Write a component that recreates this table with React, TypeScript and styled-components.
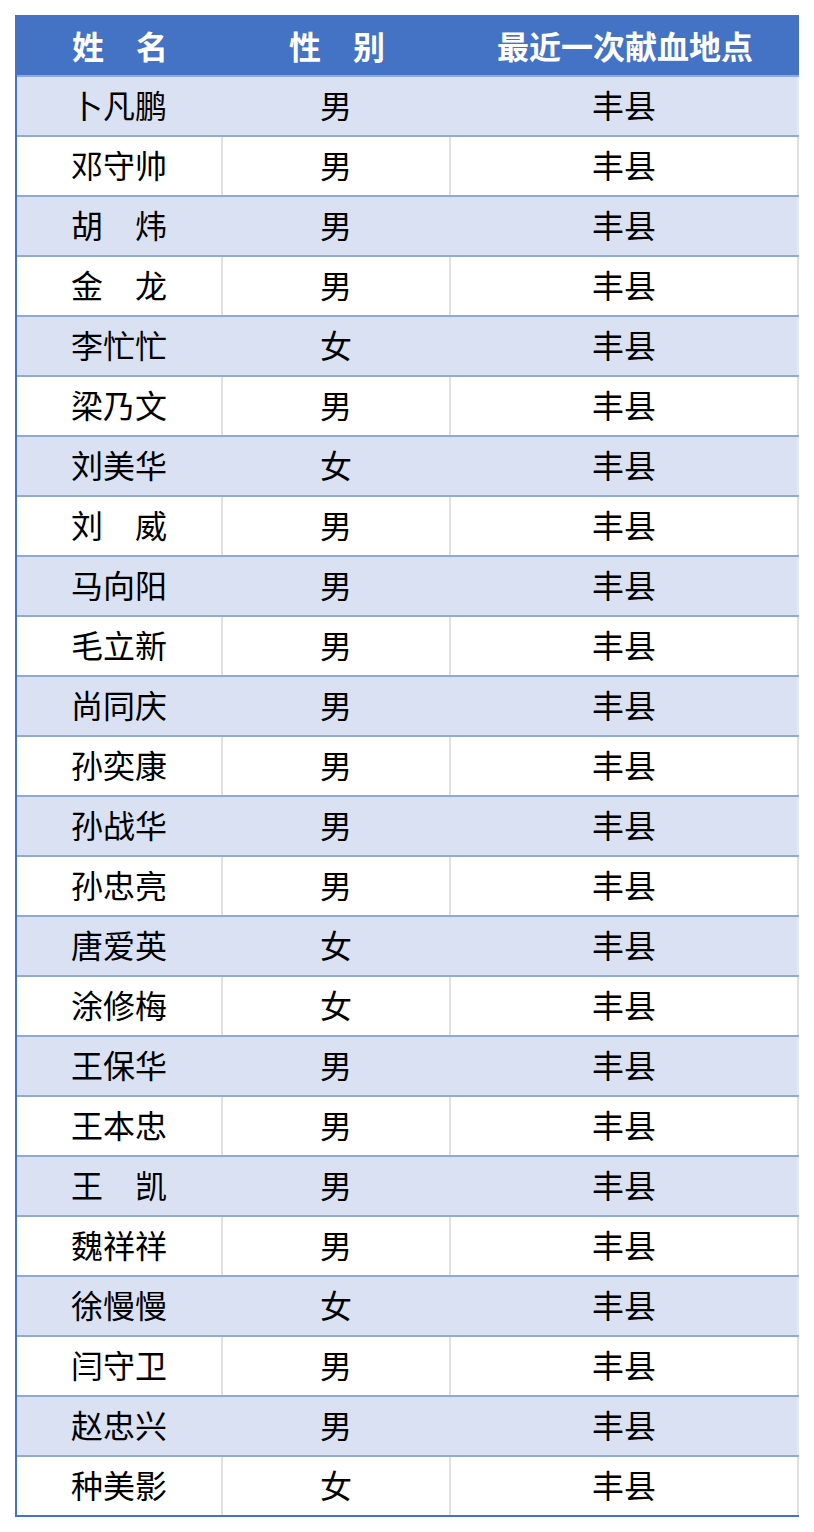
import React from "react";
import styled, { createGlobalStyle } from "styled-components";

type Donor = {
  name: string;
  gender: string;
  place: string;
};

const donors: Donor[] = [
  { name: "卜凡鹏", gender: "男", place: "丰县" },
  { name: "邓守帅", gender: "男", place: "丰县" },
  { name: "胡　炜", gender: "男", place: "丰县" },
  { name: "金　龙", gender: "男", place: "丰县" },
  { name: "李忙忙", gender: "女", place: "丰县" },
  { name: "梁乃文", gender: "男", place: "丰县" },
  { name: "刘美华", gender: "女", place: "丰县" },
  { name: "刘　威", gender: "男", place: "丰县" },
  { name: "马向阳", gender: "男", place: "丰县" },
  { name: "毛立新", gender: "男", place: "丰县" },
  { name: "尚同庆", gender: "男", place: "丰县" },
  { name: "孙奕康", gender: "男", place: "丰县" },
  { name: "孙战华", gender: "男", place: "丰县" },
  { name: "孙忠亮", gender: "男", place: "丰县" },
  { name: "唐爱英", gender: "女", place: "丰县" },
  { name: "涂修梅", gender: "女", place: "丰县" },
  { name: "王保华", gender: "男", place: "丰县" },
  { name: "王本忠", gender: "男", place: "丰县" },
  { name: "王　凯", gender: "男", place: "丰县" },
  { name: "魏祥祥", gender: "男", place: "丰县" },
  { name: "徐慢慢", gender: "女", place: "丰县" },
  { name: "闫守卫", gender: "男", place: "丰县" },
  { name: "赵忠兴", gender: "男", place: "丰县" },
  { name: "种美影", gender: "女", place: "丰县" }
];

const GlobalStyle = createGlobalStyle`
  body {
    margin: 0;
    background: #ffffff;
    font-family: "Noto Sans CJK SC", "Noto Sans", sans-serif;
  }
`;

const App: React.FC = () => {
  return (
    <>
      <GlobalStyle />
      <Page>
        <Table>
          <HeaderRow>
            <HeaderCell>姓　名</HeaderCell>
            <HeaderCell>性　别</HeaderCell>
            <HeaderCell>最近一次献血地点</HeaderCell>
          </HeaderRow>
          {donors.map((d, i) => (
            <Row key={d.name} banded={i % 2 === 0}>
              <Cell banded={i % 2 === 0}>{d.name}</Cell>
              <Cell banded={i % 2 === 0}>{d.gender}</Cell>
              <Cell banded={i % 2 === 0} last>
                {d.place}
              </Cell>
            </Row>
          ))}
        </Table>
      </Page>
    </>
  );
};

const Page = styled.div`
  padding: 15px;
`;

const Table = styled.div`
  width: 784px;
  box-sizing: border-box;
  border-left: 2px solid #4472c4;
  border-bottom: 2px solid #4472c4;
`;

const HeaderRow = styled.div`
  display: grid;
  grid-template-columns: 206px 228px 348px;
  height: 60px;
  margin-left: -2px;
  padding-left: 2px;
  width: 784px;
  box-sizing: border-box;
  background-color: #4472c4;
`;

const HeaderCell = styled.div`
  display: flex;
  align-items: center;
  justify-content: center;
  color: #ffffff;
  font-size: 32px;
  font-weight: 700;
  white-space: nowrap;
`;

const Row = styled.div<{ banded: boolean }>`
  display: grid;
  grid-template-columns: 206px 228px 348px;
  height: 60px;
  box-sizing: border-box;
  border-top: 2px solid #8eaadb;
  background-color: ${({ banded }) => (banded ? "#d9e1f2" : "#ffffff")};
`;

const Cell = styled.div<{ banded: boolean; last?: boolean }>`
  display: flex;
  align-items: center;
  justify-content: center;
  box-sizing: border-box;
  padding-bottom: 4px;
  border-right: 2px solid
    ${({ banded, last }) =>
      banded ? (last ? "#e2e8f4" : "#d9e1f2") : "#e0e0e0"};
  color: #000000;
  font-size: 32px;
  white-space: nowrap;
`;

export default App;
